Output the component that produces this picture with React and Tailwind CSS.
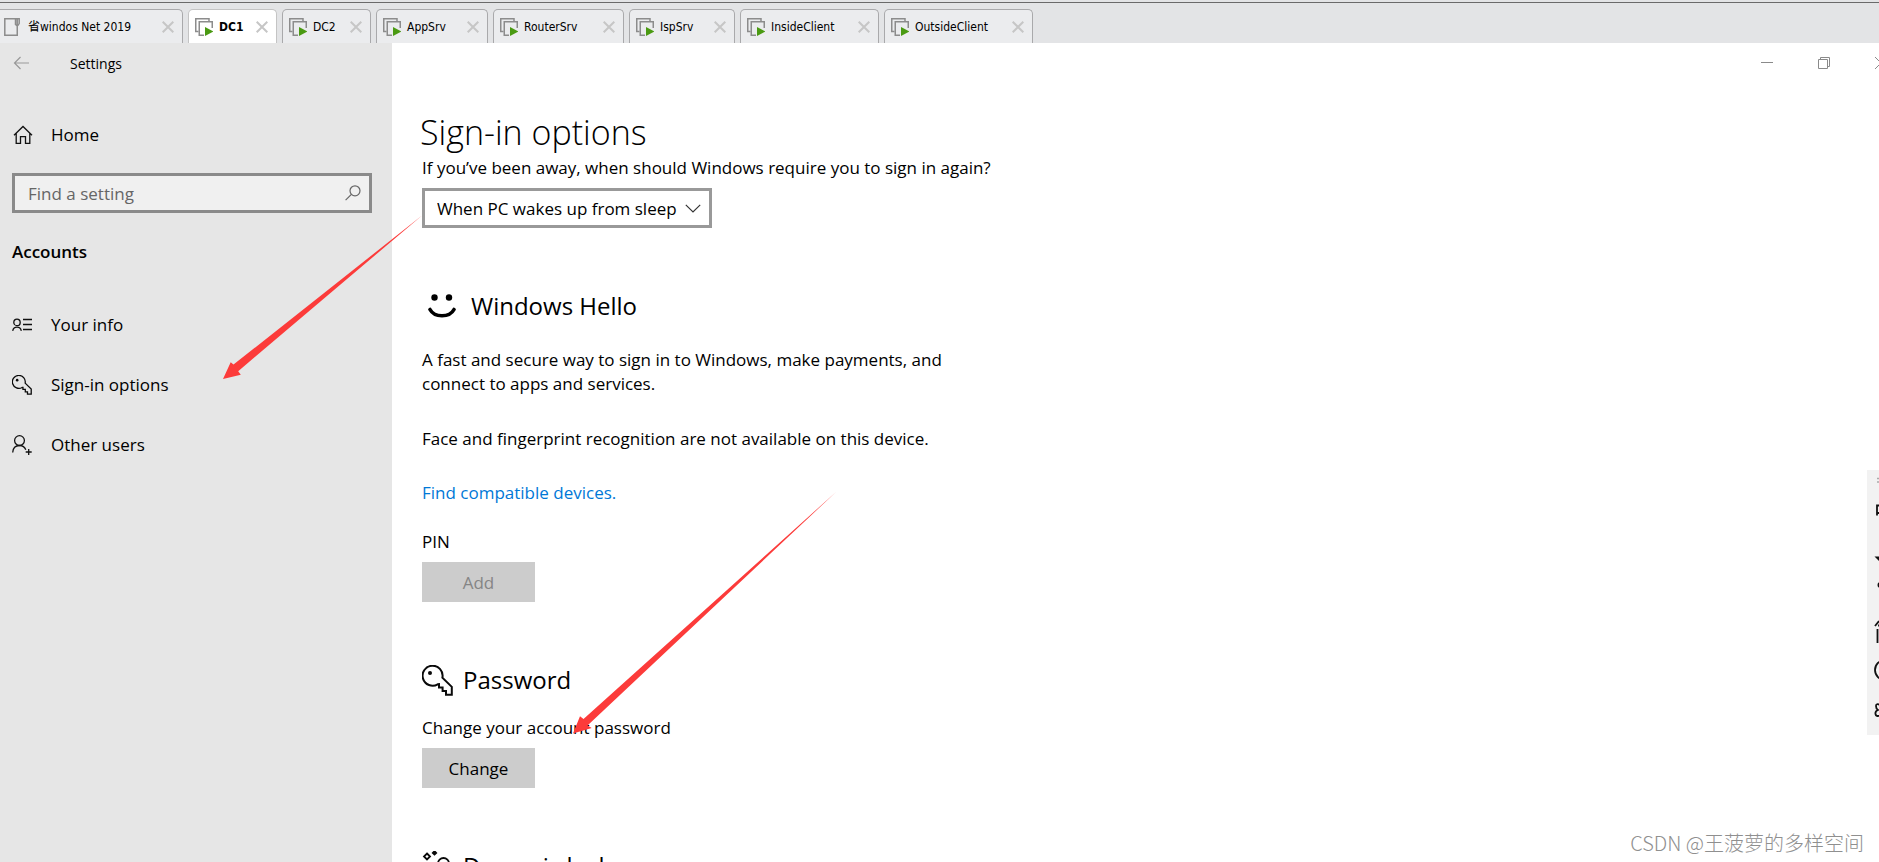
import React from 'react';

const tabs = [
  { name: '省windos Net 2019', width: 'w-[183px]', first: true },
  { name: 'DC1', width: 'w-[89px]', active: true },
  { name: 'DC2', width: 'w-[89px]' },
  { name: 'AppSrv', width: 'w-[112px]' },
  { name: 'RouterSrv', width: 'w-[131px]' },
  { name: 'IspSrv', width: 'w-[106px]' },
  { name: 'InsideClient', width: 'w-[139px]' },
  { name: 'OutsideClient', width: 'w-[149px]' },
];

function VmIcon() {
  return (
    <svg width="18" height="18" viewBox="0 0 18 18" fill="none" className="shrink-0" aria-hidden="true">
      <path d="M14 3.5V.75H.75V13.5H3.5" stroke="#8c8c8c" strokeWidth="1.5" />
      <path d="M17.25 10V3.75H4.25V17.25H9" stroke="#8c8c8c" strokeWidth="1.5" />
      <path d="M10 9v9l8.5-4.5z" fill="#4a9a12" />
    </svg>
  );
}

function PageIcon() {
  return (
    <svg width="16" height="18" viewBox="0 0 16 18" fill="none" className="shrink-0" aria-hidden="true">
      <path d="M13.25 8v9.2H.8V.8h14.4V5.5q-1 2-2 2.5V1M11.5 1v5.5l1.7 1.5" stroke="#8c8c8c" strokeWidth="1.5" />
    </svg>
  );
}

function Tab({ tab }) {
  const tone = tab.active
    ? 'bg-white border-[#c4c4c4] font-bold'
    : 'bg-[#ebecee] border-[#a9a9ab]';
  const edge = tab.first ? 'border-l-0 rounded-tr-[5px] pl-1' : 'rounded-t-[5px] pl-[6px]';
  return (
    <div className={`flex h-[34px] shrink-0 items-center border border-b-0 pr-2 ${tab.width} ${tone} ${edge}`}>
      <button
        type="button"
        className={`flex flex-1 items-center whitespace-nowrap text-left ${tab.first ? 'gap-2' : 'gap-[6px]'}`}
      >
        {tab.first ? <PageIcon /> : <VmIcon />}
        <span>{tab.name}</span>
      </button>
      <button type="button" aria-label={`Close ${tab.name}`}>
        <svg width="12" height="12" viewBox="0 0 12 12" fill="none" stroke="#c6c6c6" strokeWidth="2" aria-hidden="true">
          <path d="M.7.7l10.6 10.6M11.3.7L.7 11.3" />
        </svg>
      </button>
    </div>
  );
}

function HomeIcon() {
  return (
    <svg width="20" height="20" viewBox="0 0 20 20" fill="none" stroke="#111" strokeWidth="1.3" aria-hidden="true">
      <path d="M1 10.2L10 1.5l9 8.7M3.2 8.3v10h4.3v-6.6h5v6.6h4.3v-10" />
    </svg>
  );
}

function InfoIcon() {
  return (
    <svg width="20" height="14" viewBox="0 0 20 14" fill="none" stroke="#111" strokeWidth="1.3" aria-hidden="true">
      <circle cx="5" cy="4.4" r="3.2" />
      <path d="M.7 12.8a4.4 4.6 0 0 1 8.6 0M11 1.5h9M11 6.5h9M11 11.5h9" />
    </svg>
  );
}

function KeyIcon({ size, stroke }) {
  return (
    <svg width={size} height={size} viewBox="0 0 31 31" fill="none" stroke="#0a0a0a" strokeWidth={stroke} aria-hidden="true">
      <path d="M15.7 19.3A10 10 0 1 1 20.4 12.6L29.8 21.8V29.8H24V26H20.6V22.4H17V19.2z" />
      <circle cx="8" cy="8" r="2" fill="#0a0a0a" stroke="none" />
    </svg>
  );
}

function UserAddIcon() {
  return (
    <svg width="20" height="20" viewBox="0 0 20 20" fill="none" stroke="#111" strokeWidth="1.3" aria-hidden="true">
      <circle cx="7.5" cy="5.6" r="4.9" />
      <path d="M.7 17.5c.3-4.5 3-7 6.8-7 3.2 0 5.3 1.5 6.3 4.3M16.7 14v6M13.7 17h6" />
    </svg>
  );
}

const navItems = [
  { label: 'Your info', icon: <InfoIcon /> },
  { label: 'Sign-in options', icon: <KeyIcon size={20} stroke={2} /> },
  { label: 'Other users', icon: <UserAddIcon /> },
];

function Sidebar() {
  return (
    <aside className="w-[392px] shrink-0 bg-[#e6e6e6]">
      <div className="flex h-10 items-center">
        <button type="button" aria-label="Back" className="ml-[13px]">
          <svg width="17" height="14" viewBox="0 0 17 14" fill="none" stroke="#999" strokeWidth="1.2" aria-hidden="true">
            <path d="M16 7H1.5M7.5 1l-6 6 6 6" />
          </svg>
        </button>
        <span className="ml-10 text-[14px]">Settings</span>
      </div>
      <a href="#home" className="mt-8 flex h-10 items-center px-3">
        <span className="flex w-[39px] items-center pl-px"><HomeIcon /></span>
        Home
      </a>
      <label className="mt-[18px] mr-5 ml-3 flex h-10 items-center border-[3px] border-[#8a8a8a] bg-[#f0f0f0]">
        <input
          type="text"
          aria-label="Find a setting"
          placeholder="Find a setting"
          className="min-w-0 flex-1 bg-transparent pt-0.5 pl-[13px] outline-none placeholder:text-[#666]"
        />
        <svg width="16" height="16" viewBox="0 0 16 16" fill="none" stroke="#666" strokeWidth="1.2" className="mr-2" aria-hidden="true">
          <circle cx="10" cy="5.8" r="5" />
          <path d="M6.4 9.4L.6 15.2" />
        </svg>
      </label>
      <h2 className="mt-[19px] flex h-10 items-center px-3 font-semibold">Accounts</h2>
      <nav className="mt-[23px]">
        {navItems.map((item) => (
          <a key={item.label} href="#section" className="flex h-[60px] items-center px-3">
            <span className="w-[39px]">{item.icon}</span>
            {item.label}
          </a>
        ))}
      </nav>
    </aside>
  );
}

function WindowControls() {
  return (
    <div className="-mr-2 flex h-10 items-center justify-end gap-[45px] text-[#8a8a8a]">
      <button type="button" aria-label="Minimize">
        <svg width="12" height="12" viewBox="0 0 12 12" stroke="currentColor" aria-hidden="true"><path d="M0 5.5h12" /></svg>
      </button>
      <button type="button" aria-label="Restore">
        <svg width="12" height="12" viewBox="0 0 12 12" fill="none" stroke="currentColor" aria-hidden="true">
          <path d="M.5 2.5h9v9h-9zM2.5 2.5v-2h9v9h-2" />
        </svg>
      </button>
      <button type="button" aria-label="Close">
        <svg width="12" height="12" viewBox="0 0 12 12" stroke="currentColor" aria-hidden="true"><path d="M0 0l12 12M12 0L0 12" /></svg>
      </button>
    </div>
  );
}

function Content() {
  return (
    <main className="flex min-w-0 flex-1 flex-col overflow-hidden bg-white">
      <WindowControls />
      <h1 className="mt-[25px] ml-[28px] h-[54px] shrink-0 text-[34px] leading-[48px] font-light">Sign-in options</h1>
      <div className="min-h-0 flex-1 overflow-hidden pl-[30px]">
        <label htmlFor="require" className="-mt-[6px] block leading-6">
          If you’ve been away, when should Windows require you to sign in again?
        </label>
        <div className="relative mt-2 w-[290px]">
          <select
            id="require"
            className="h-10 w-full appearance-none border-[3px] border-[#999] bg-white pt-0.5 pl-3 outline-none"
          >
            <option>When PC wakes up from sleep</option>
          </select>
          <svg width="16" height="10" viewBox="0 0 16 10" fill="none" stroke="#333" strokeWidth="1.2" className="pointer-events-none absolute top-4 right-[11px]" aria-hidden="true">
            <path d="M.8.8L8 8l7.2-7.2" />
          </svg>
        </div>

        <section>
          <h2 className="mt-[58px] flex h-10 items-center text-[24px]">
            <svg width="28" height="24" viewBox="0 0 28 24" className="mr-[15px] ml-[6px]" aria-hidden="true">
              <circle cx="6.5" cy="3.5" r="3.2" />
              <circle cx="21" cy="3.5" r="3.2" />
              <path d="M2 15.5c4.5 8.4 19.500 8.4 24 0" fill="none" stroke="#000" strokeWidth="3.6" strokeLinecap="round" />
            </svg>
            Windows Hello
          </h2>
          <p className="mt-[22px] max-w-[530px] leading-6">
            A fast and secure way to sign in to Windows, make payments, and connect to apps and services.
          </p>
          <p className="mt-[31px] leading-6">Face and fingerprint recognition are not available on this device.</p>
          <a href="#devices" className="mt-[30px] block w-fit leading-6 text-[#0078d7]">Find compatible devices.</a>
          <h3 className="mt-[25px] leading-6">PIN</h3>
          <button type="button" disabled className="mt-2 block h-10 w-[113px] bg-[#ccc] pt-0.5 text-[#858585]">Add</button>
        </section>

        <section>
          <h2 className="mt-[58px] flex h-10 items-center gap-[10px] text-[24px]">
            <KeyIcon size={31} stroke={2} />
            Password
          </h2>
          <p className="mt-4 leading-6">Change your account password</p>
          <button type="button" className="mt-2 block h-10 w-[113px] bg-[#ccc] pt-0.5">Change</button>
        </section>

        <section>
          <h2 className="mt-[58px] flex h-10 items-center gap-[10px] text-[24px]">
            <svg width="31" height="31" viewBox="0 0 31 31" fill="none" stroke="#0a0a0a" strokeWidth="1.8" aria-hidden="true">
              <path d="M5 2.5l3 3-3 3-3-3z" />
              <path d="M12.5.2l1.700 1.7-1.7 1.7-1.7-1.7z" fill="#0a0a0a" stroke="#0a0a0a" />
              <path d="M16 16v-3.5a5.5 5.5 0 0 1 11 0V16M13 16h17v13H13z" />
            </svg>
            Dynamic lock
          </h2>
        </section>
      </div>
    </main>
  );
}

function ImePanel() {
  return (
    <div className="absolute top-[470px] right-0 h-[265px] w-3 overflow-hidden bg-[#f2f2f2]">
      <svg width="12" height="265" viewBox="0 0 12 265" fill="none" stroke="#111" strokeWidth="1.8" aria-hidden="true">
        <path d="M10 8.5h2M10 12h2" stroke="#aaa" strokeWidth="1.5" />
        <path d="M12 35.5h-2v10M10 43h2" />
        <path d="M7.5 86.500h4.5v4.500z" fill="#111" stroke="none" />
        <circle cx="13.5" cy="115" r="3" fill="#111" stroke="none" />
        <path d="M8 156l4-5M10.5 159v14M12 154.5v2" />
        <circle cx="18" cy="200" r="10" />
        <path d="M13 235q-4-2-4 1t2 4q-3 1-2.5 4t4.5 1.5" />
      </svg>
    </div>
  );
}

function Arrows() {
  return (
    <svg width="860" height="760" viewBox="0 0 860 760" className="pointer-events-none absolute top-0 left-0" fill="#fc3b3a" aria-hidden="true">
      <path d="M422 215.500L238.200 371.200 240.800 374.700 223 379l7.700-16.800 2.800 2.400z" />
      <path d="M836 492L587.500 725.500 591.700 728 573 733.500l7-17.200 3.500 2.700z" />
    </svg>
  );
}

export default function App() {
  return (
    <div className="relative flex h-screen flex-col overflow-hidden bg-white font-['Open_Sans','Noto_Sans',sans-serif] text-[17px] text-black">
      <header className="flex h-[43px] shrink-0 flex-col bg-[#e3e4e6]">
        <div className="h-[3px] border-b border-[#6a6a6a]" />
        <div className="mt-[6px] flex gap-[5px] font-['DejaVu_Sans_Condensed','Noto_Sans_CJK_SC',sans-serif] text-[12px]">
          {tabs.map((tab) => (
            <Tab key={tab.name} tab={tab} />
          ))}
        </div>
      </header>
      <div className="flex min-h-0 flex-1">
        <Sidebar />
        <Content />
      </div>
      <ImePanel />
      <Arrows />
      <div className="absolute right-[15px] bottom-1 font-['Noto_Sans_CJK_SC',sans-serif] text-[20px] leading-[30px] font-light text-[#8f8f8f]">
        CSDN @王菠萝的多样空间
      </div>
    </div>
  );
}
